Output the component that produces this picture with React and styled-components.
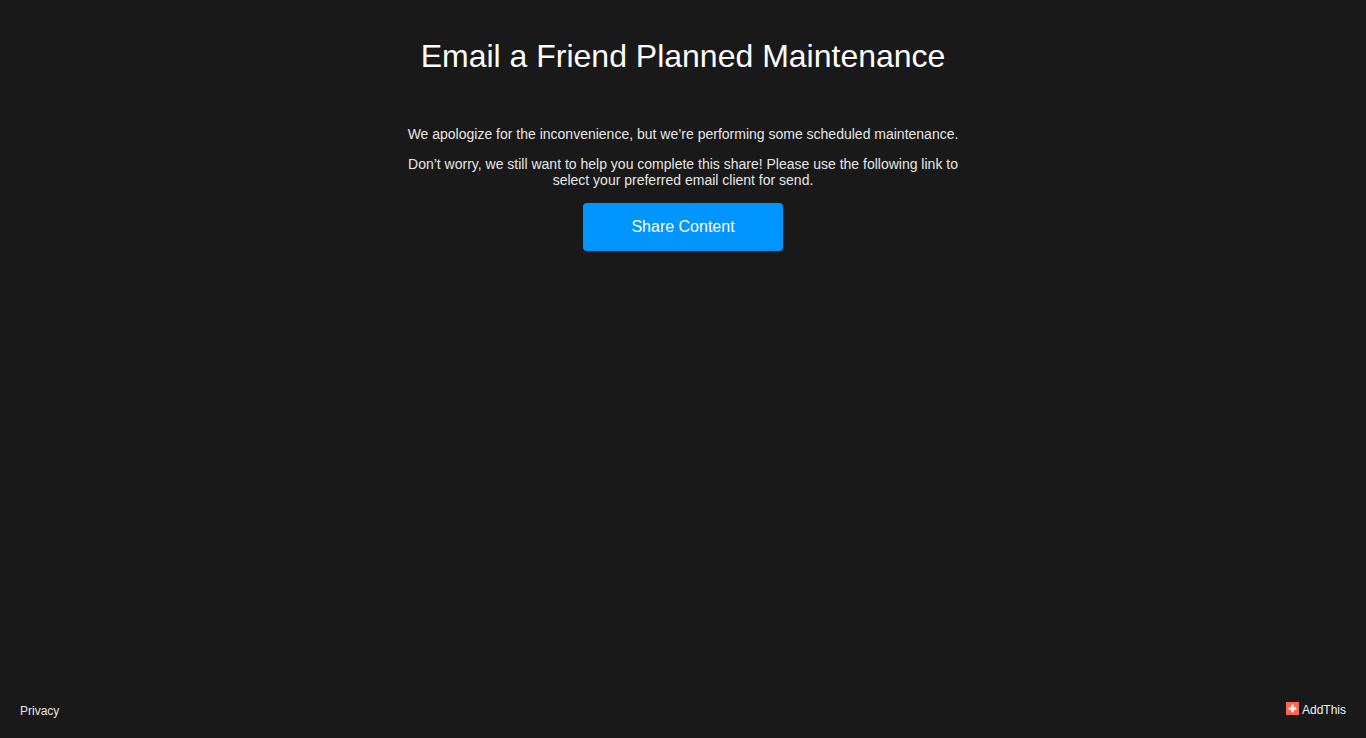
import React from "react";
import styled, { createGlobalStyle } from "styled-components";

const GlobalStyle = createGlobalStyle`
  body {
    margin: 0;
    background: #191919;
    color: #e6e6e6;
    font-family: "Liberation Sans", Arial, sans-serif;
    font-size: 14px;
    line-height: 16px;
  }
`;

const Page = styled.div`
  display: flex;
  flex-direction: column;
  min-height: 100vh;
`;

const Main = styled.main`
  flex: 1;
  display: flex;
  flex-direction: column;
  align-items: center;
  padding: 36px 20px 20px;
  text-align: center;
`;

const Title = styled.h1`
  margin: 0 0 50px;
  color: #ffffff;
  font-size: 32px;
  font-weight: 400;
  line-height: 40px;
`;

const Message = styled.p`
  max-width: 560px;
  margin: 0 0 14px;
`;

const ShareButton = styled.button`
  width: 200px;
  height: 48px;
  margin-top: 1px;
  padding: 0;
  border: 0;
  border-radius: 4px;
  background: #0095ff;
  color: #ffffff;
  font-family: inherit;
  font-size: 16px;
  cursor: pointer;
`;

const Footer = styled.footer`
  display: flex;
  justify-content: space-between;
  align-items: flex-start;
  padding: 0 20px 18px;
  font-size: 12px;
`;

const FooterLink = styled.a`
  color: inherit;
  line-height: 18px;
  text-decoration: none;
`;

const BrandLink = styled(FooterLink)`
  display: flex;
  gap: 3px;
  color: #f2f2f2;
  line-height: 16px;
`;

const PlusIcon = () => (
  <svg width="13" height="13" viewBox="0 0 13 13" aria-hidden="true">
    <rect width="13" height="13" fill="#ff6550" />
    <path
      d="M6.5 3.8v5.4M3.8 6.5h5.4"
      fill="none"
      stroke="#ffffff"
      strokeWidth="2.7"
      strokeLinecap="round"
    />
  </svg>
);

export default function App() {
  return (
    <Page>
      <GlobalStyle />
      <Main>
        <Title>Email a Friend Planned Maintenance</Title>
        <Message>
          We apologize for the inconvenience, but we’re performing some scheduled maintenance.
        </Message>
        <Message>
          Don’t worry, we still want to help you complete this share! Please use the following
          link to select your preferred email client for send.
        </Message>
        <ShareButton type="button">Share Content</ShareButton>
      </Main>
      <Footer>
        <FooterLink href="#privacy">Privacy</FooterLink>
        <BrandLink href="#addthis">
          <PlusIcon />
          AddThis
        </BrandLink>
      </Footer>
    </Page>
  );
}
